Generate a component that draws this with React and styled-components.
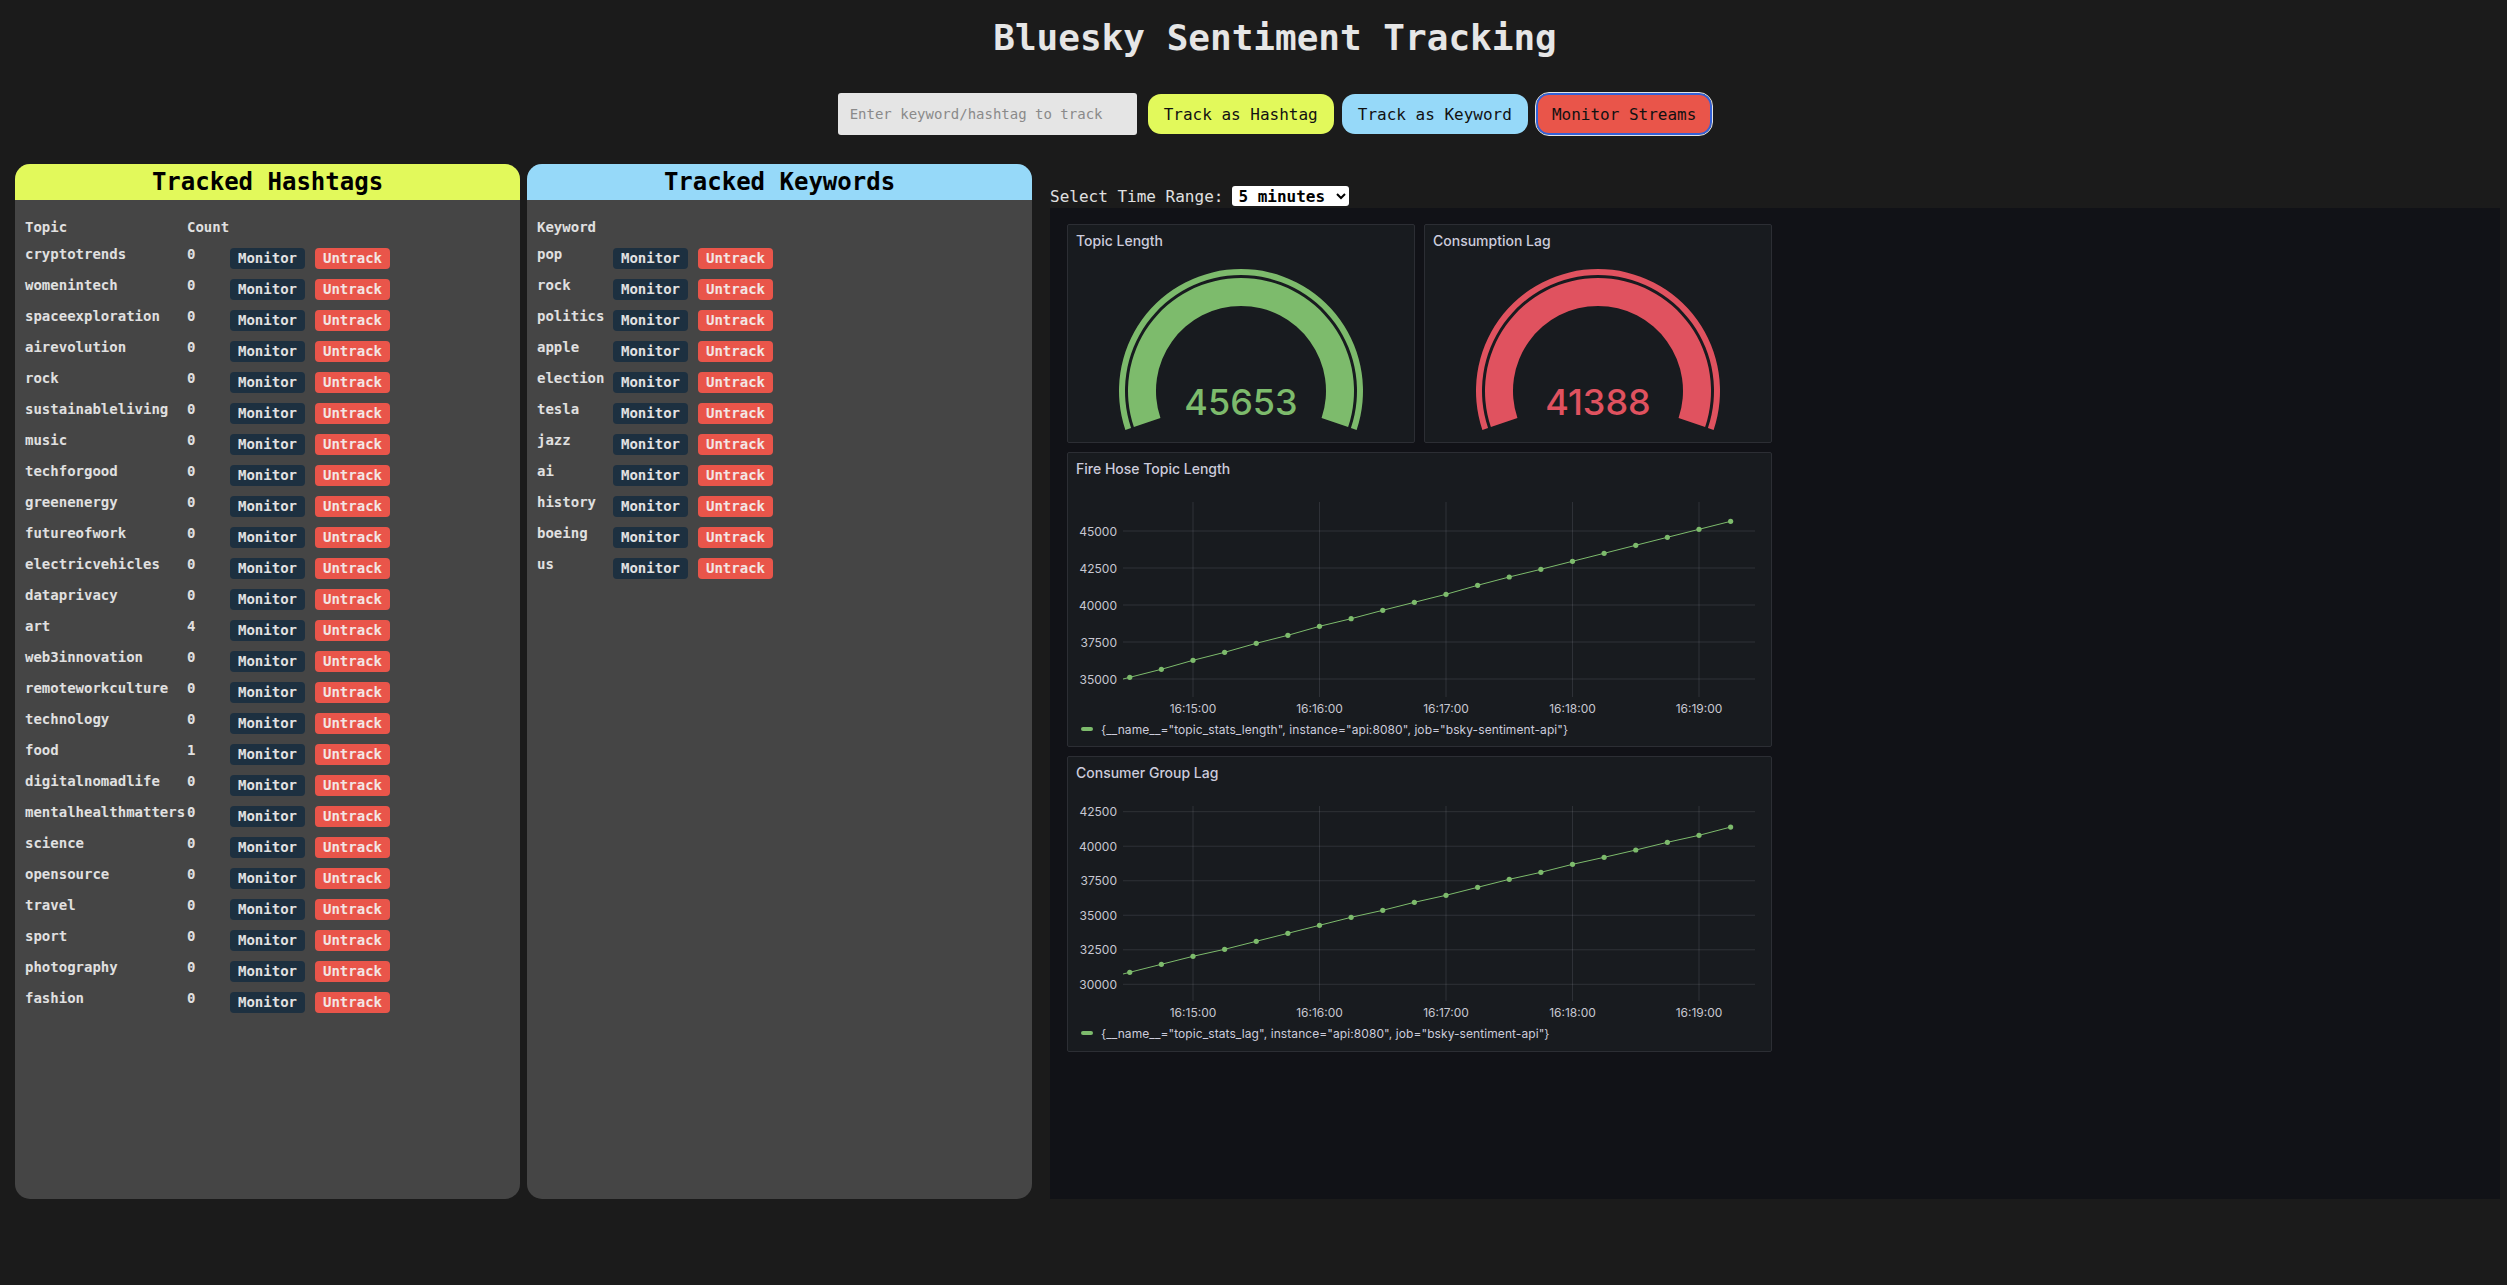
import React from "react";
import styled, { createGlobalStyle } from "styled-components";

const GlobalStyle = createGlobalStyle`
  html, body {
    margin: 0;
    background: #1b1b1b;
  }
  body {
    font-family: "DejaVu Sans Mono", monospace;
    color: #e2e2e2;
  }
`;

const hashtags = [
  ["cryptotrends", 0], ["womenintech", 0], ["spaceexploration", 0], ["airevolution", 0],
  ["rock", 0], ["sustainableliving", 0], ["music", 0], ["techforgood", 0],
  ["greenenergy", 0], ["futureofwork", 0], ["electricvehicles", 0], ["dataprivacy", 0],
  ["art", 4], ["web3innovation", 0], ["remoteworkculture", 0], ["technology", 0],
  ["food", 1], ["digitalnomadlife", 0], ["mentalhealthmatters", 0], ["science", 0],
  ["opensource", 0], ["travel", 0], ["sport", 0], ["photography", 0], ["fashion", 0],
];

const keywords = ["pop", "rock", "politics", "apple", "election", "tesla", "jazz", "ai", "history", "boeing", "us"];

const lengthData = [34570, 35114, 35655, 36263, 36804, 37412, 37952, 38561, 39074, 39642, 40182,
  40723, 41331, 41892, 42412, 42953, 43493, 44034, 44574, 45115, 45653];
const lagData = [30290, 30869, 31448, 32028, 32534, 33114, 33693, 34272, 34852, 35358, 35938,
  36445, 37024, 37603, 38110, 38689, 39196, 39725, 40282, 40789, 41388];

const GREEN = "#7dbb6c";
const RED = "#e0525f";

export default function App() {
  return (
    <>
      <GlobalStyle />
      <Header>
        <Title>Bluesky Sentiment Tracking</Title>
        <Controls>
          <TrackInput placeholder="Enter keyword/hashtag to track" />
          <ActionButton $bg="#e2f95b">Track as Hashtag</ActionButton>
          <ActionButton $bg="#96d9f9">Track as Keyword</ActionButton>
          <ActionButton $bg="#e9554a" $focused>Monitor Streams</ActionButton>
        </Controls>
      </Header>
      <Main>
        <Panel>
          <PanelHeader $bg="#e2f95b">Tracked Hashtags</PanelHeader>
          <PanelBody>
            <Row $cols="162px 43px auto" $head>
              <Cell>Topic</Cell>
              <Cell>Count</Cell>
            </Row>
            {hashtags.map(([name, count]) => (
              <Row key={name} $cols="162px 43px auto">
                <Cell>{name}</Cell>
                <Cell>{count}</Cell>
                <Actions>
                  <SmallButton>Monitor</SmallButton>
                  <SmallButton $danger>Untrack</SmallButton>
                </Actions>
              </Row>
            ))}
          </PanelBody>
        </Panel>
        <Panel>
          <PanelHeader $bg="#96d9f9">Tracked Keywords</PanelHeader>
          <PanelBody>
            <Row $cols="76px auto" $head>
              <Cell>Keyword</Cell>
            </Row>
            {keywords.map((k) => (
              <Row key={k} $cols="76px auto">
                <Cell>{k}</Cell>
                <Actions>
                  <SmallButton>Monitor</SmallButton>
                  <SmallButton $danger>Untrack</SmallButton>
                </Actions>
              </Row>
            ))}
          </PanelBody>
        </Panel>
        <RightColumn>
          <RangeRow>
            <RangeLabel>Select Time Range:</RangeLabel>
            <RangeSelect defaultValue="5m">
              <option value="5m">5 minutes</option>
              <option value="15m">15 minutes</option>
              <option value="1h">1 hour</option>
            </RangeSelect>
          </RangeRow>
          <Dashboard>
            <GPanel>
              <GTitle>Topic Length</GTitle>
              <Gauge value="45653" color={GREEN} />
            </GPanel>
            <GPanel>
              <GTitle>Consumption Lag</GTitle>
              <Gauge value="41388" color={RED} />
            </GPanel>
            <GPanel $wide>
              <GTitle>Fire Hose Topic Length</GTitle>
              <Chart data={lengthData} ticks={[35000, 37500, 40000, 42500, 45000]} low={[35000, 202]} high={[45000, 54]} />
              <Legend>
                <LegendMark />
                {'{__name__="topic_stats_length", instance="api:8080", job="bsky-sentiment-api"}'}
              </Legend>
            </GPanel>
            <GPanel $wide>
              <GTitle>Consumer Group Lag</GTitle>
              <Chart data={lagData} ticks={[30000, 32500, 35000, 37500, 40000, 42500]} low={[30000, 203.3]} high={[42500, 30.7]} />
              <Legend>
                <LegendMark />
                {'{__name__="topic_stats_lag", instance="api:8080", job="bsky-sentiment-api"}'}
              </Legend>
            </GPanel>
          </Dashboard>
        </RightColumn>
      </Main>
    </>
  );
}

function sector(cx, cy, r0, r1, a0, a1) {
  const pt = (r, a) => [
    (cx + r * Math.sin((a * Math.PI) / 180)).toFixed(2),
    (cy - r * Math.cos((a * Math.PI) / 180)).toFixed(2),
  ];
  const large = a1 - a0 > 180 ? 1 : 0;
  const [x1, y1] = pt(r1, a0);
  const [x2, y2] = pt(r1, a1);
  const [x3, y3] = pt(r0, a1);
  const [x4, y4] = pt(r0, a0);
  return `M${x1} ${y1} A${r1} ${r1} 0 ${large} 1 ${x2} ${y2} L${x3} ${y3} A${r0} ${r0} 0 ${large} 0 ${x4} ${y4}Z`;
}

function Gauge({ value, color }) {
  const cx = 173;
  const cy = 142;
  return (
    <GaugeSvg viewBox="0 0 346 193">
      <path d={sector(cx, cy, 116, 122, -108.6, 108.6)} fill={color} />
      <path d={sector(cx, cy, 85, 113, -108.6, 108.6)} fill={color} />
      <text x={cx} y={166} textAnchor="middle" fill={color} fontSize="36" fontWeight="500" fontFamily="Inter, sans-serif">
        {value}
      </text>
    </GaugeSvg>
  );
}

const times = ["16:15:00", "16:16:00", "16:17:00", "16:18:00", "16:19:00"];

function Chart({ data, ticks, low, high }) {
  const left = 55;
  const right = 687;
  const scale = (high[1] - low[1]) / (high[0] - low[0]);
  const y = (v) => low[1] + (v - low[0]) * scale;
  const x = (k) => 61.75 + (k - 1) * 31.625;
  const pts = data.map((v, k) => [x(k), y(v)]);
  const clipId = `clip-${low[0]}`;
  return (
    <ChartSvg viewBox="0 0 702 240">
      <defs>
        <clipPath id={clipId}>
          <rect x={left} y={0} width={right - left} height={225} />
        </clipPath>
      </defs>
      {ticks.map((t) => (
        <g key={t}>
          <line x1={left} x2={right} y1={y(t)} y2={y(t)} stroke="rgba(204,204,220,0.13)" />
          <text x={49} y={y(t) + 4.5} textAnchor="end" fontSize="12" fill="#c7c7d1" fontFamily="Inter, sans-serif">
            {t}
          </text>
        </g>
      ))}
      {times.map((t, i) => {
        const tx = 125 + i * 126.5;
        return (
          <g key={t}>
            <line x1={tx} x2={tx} y1={25} y2={220} stroke="rgba(204,204,220,0.13)" />
            <text x={tx} y={235.5} textAnchor="middle" fontSize="12" fill="#c7c7d1" fontFamily="Inter, sans-serif">
              {t}
            </text>
          </g>
        );
      })}
      <g clipPath={`url(#${clipId})`}>
        <polyline points={pts.map((p) => p.join(",")).join(" ")} fill="none" stroke={GREEN} strokeWidth="1" />
        {pts.slice(1).map(([px, py], i) => (
          <circle key={i} cx={px} cy={py} r="2.6" fill={GREEN} />
        ))}
      </g>
    </ChartSvg>
  );
}

const Header = styled.header`
  padding-left: 43px;
  text-align: center;
`;

const Title = styled.h1`
  margin: 17px 0 0;
  font-size: 36px;
  line-height: 42px;
  font-weight: bold;
  color: #e6e6e6;
`;

const Controls = styled.div`
  display: flex;
  justify-content: center;
  align-items: center;
  gap: 8px;
  height: 44px;
  margin: 33px 0 28px;
`;

const TrackInput = styled.input`
  box-sizing: border-box;
  width: 299px;
  height: 42px;
  margin-right: 3px;
  padding: 0 12px;
  border: none;
  border-radius: 3px;
  background: #e5e5e5;
  font-family: "DejaVu Sans Mono", monospace;
  font-size: 14px;
  color: #222;

  &::placeholder {
    color: #8a8a8a;
  }
`;

const ActionButton = styled.button`
  box-sizing: border-box;
  height: ${(p) => (p.$focused ? "42px" : "40px")};
  padding: 0 ${(p) => (p.$focused ? "14px" : "16px")};
  border: ${(p) => (p.$focused ? "2px solid #3461d6" : "none")};
  outline: ${(p) => (p.$focused ? "1px solid #e4e4e4" : "none")};
  border-radius: 13px;
  background: ${(p) => p.$bg};
  color: #111;
  font-family: "DejaVu Sans Mono", monospace;
  font-size: 16px;
  cursor: pointer;
`;

const Main = styled.main`
  display: flex;
  gap: 7px;
  height: 1035px;
  padding: 0 7px 0 15px;
`;

const Panel = styled.section`
  display: flex;
  flex-direction: column;
  flex: none;
  width: 505px;
  border-radius: 15px;
  overflow: hidden;
  background: #454545;
`;

const PanelHeader = styled.h2`
  margin: 0;
  background: ${(p) => p.$bg};
  color: #000;
  font-size: 24px;
  line-height: 36px;
  font-weight: bold;
  text-align: center;
`;

const PanelBody = styled.div`
  padding: 16px 10px;
`;

const Row = styled.div`
  display: grid;
  grid-template-columns: ${(p) => p.$cols};
  height: ${(p) => (p.$head ? "27px" : "31px")};
`;

const Cell = styled.div`
  padding-top: 3px;
  font-size: 14px;
  line-height: 16px;
  font-weight: bold;
  color: #e0e0e0;
  white-space: nowrap;
`;

const Actions = styled.div`
  display: flex;
  gap: 10px;
  padding-top: 5px;
`;

const SmallButton = styled.button`
  height: 21px;
  padding: 0 8px;
  border: none;
  border-radius: 4px;
  background: ${(p) => (p.$danger ? "#e9554a" : "#1d3040")};
  color: ${(p) => (p.$danger ? "#f3e6e4" : "#e2e2e2")};
  font-family: "DejaVu Sans Mono", monospace;
  font-size: 14px;
  line-height: 21px;
  font-weight: bold;
  cursor: pointer;
`;

const RightColumn = styled.div`
  display: flex;
  flex-direction: column;
  flex: 1;
  min-width: 0;
  margin-left: 11px;
`;

const RangeRow = styled.div`
  display: flex;
  align-items: center;
  height: 20px;
  margin-top: 22px;
  font-size: 16px;
  color: #e0e0e0;
`;

const RangeLabel = styled.span`
  margin-right: 9px;
`;

const RangeSelect = styled.select`
  box-sizing: border-box;
  width: 117px;
  height: 20px;
  padding: 0 0 0 2px;
  border: none;
  border-radius: 3px;
  background: #fff;
  color: #000;
  font-family: "DejaVu Sans Mono", monospace;
  font-size: 16px;
  font-weight: bold;
`;

const Dashboard = styled.div`
  flex: 1;
  margin-top: 2px;
  padding: 16px 17px;
  background: #111217;
  display: grid;
  grid-template-columns: 348px 348px;
  grid-template-rows: 219px 295px 296px;
  gap: 9px;
  align-content: start;
`;

const GPanel = styled.div`
  box-sizing: border-box;
  display: flex;
  flex-direction: column;
  grid-column: ${(p) => (p.$wide ? "1 / span 2" : "auto")};
  border: 1px solid #2c2e34;
  border-radius: 2px;
  background: #181b1f;
  font-family: Inter, sans-serif;
`;

const GTitle = styled.div`
  padding: 8px 8px 0;
  font-size: 14px;
  line-height: 16px;
  font-weight: 500;
  color: #ccccdc;
`;

const GaugeSvg = styled.svg`
  display: block;
  width: 346px;
  height: 193px;
`;

const ChartSvg = styled.svg`
  display: block;
  width: 702px;
  height: 240px;
`;

const Legend = styled.div`
  display: flex;
  align-items: center;
  gap: 8px;
  height: 24px;
  padding-left: 13px;
  font-size: 12px;
  letter-spacing: 0.08px;
  color: #ccccdc;
`;

const LegendMark = styled.span`
  width: 12px;
  height: 4px;
  border-radius: 2px;
  background: ${GREEN};
`;
